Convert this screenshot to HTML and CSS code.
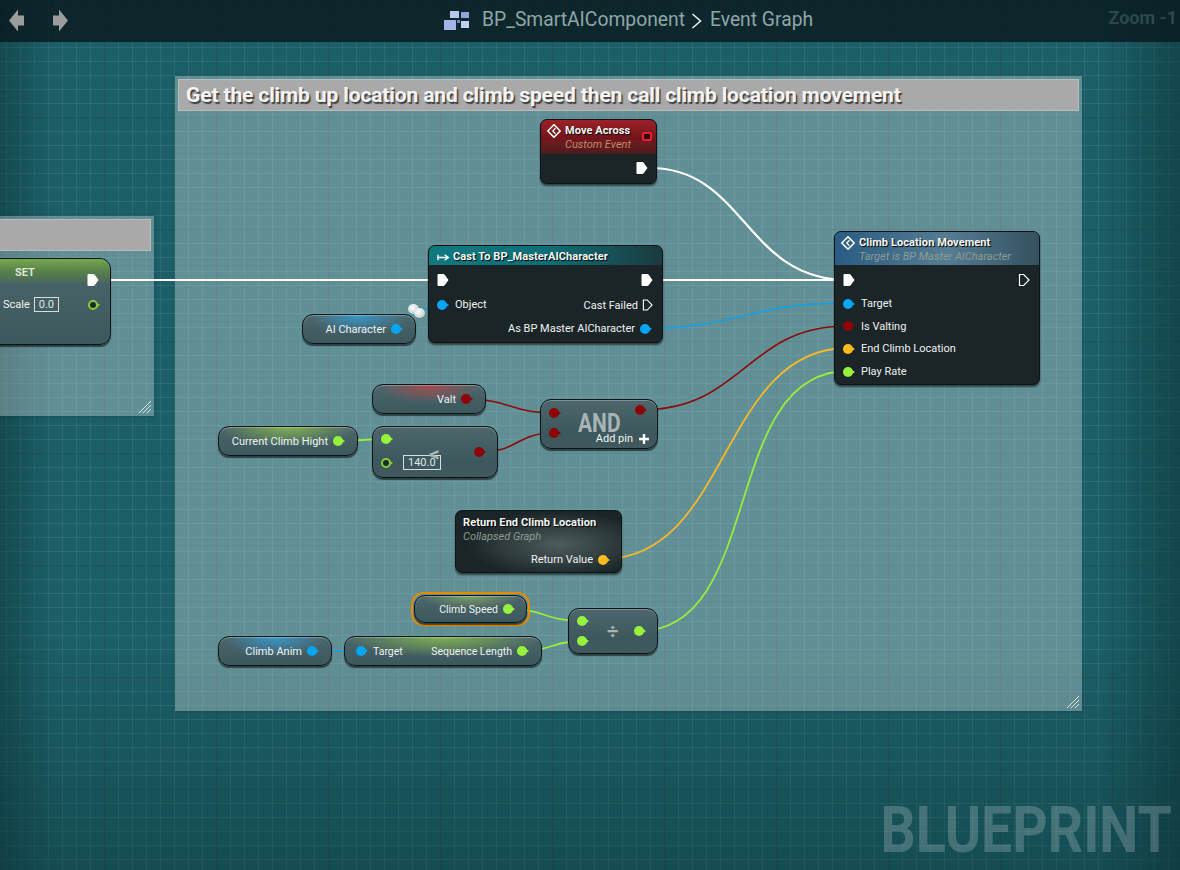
FILE: index.html
```html
<!DOCTYPE html>
<html lang="en">
<head>
<meta charset="utf-8">
<title>BP_SmartAIComponent - Event Graph</title>
<link rel="stylesheet" href="styles.css">
</head>
<body>
<svg class="defs" width="0" height="0" aria-hidden="true">
  <defs>
    <symbol id="exec" viewBox="0 0 12 14"><path d="M1.500 1h4.500q1 0 1.700.8l3.800 5.200-3.800 5.200q-.7.8-1.700.8H1.500q-1 0-1-1V2q0-1 1-1z"/></symbol>
    <symbol id="event" viewBox="0 0 14 14"><path d="M7 .8 13.200 7 7 13.200.8 7z" fill="none" stroke="#fff" stroke-width="1.600"/><path d="M8.400 4.200 5.800 7l2.600 2.800" fill="none" stroke="#fff" stroke-width="1.300"/></symbol>
  </defs>
</svg>
<div class="app">
  <header class="topbar">
    <nav class="nav">
      <svg class="nav-icon" viewBox="0 0 16 22"><path d="M0 11 9 0v6h6v10H9v6z" fill="#9c9c9c"/></svg>
      <svg class="nav-icon" viewBox="0 0 16 22"><path d="M16 11 7 0v6H1v10h6v6z" fill="#9c9c9c"/></svg>
    </nav>
    <div class="crumbs">
      <svg class="bp-logo" viewBox="0 0 26 20">
        <rect x="6" y="0" width="9" height="7" fill="#b9c6ee"/>
        <rect x="17" y="1" width="8" height="6" fill="#8fa3dc"/>
        <rect x="0" y="9" width="12" height="10" fill="#a3b4e8"/>
        <rect x="17" y="10" width="8" height="7" fill="#c3cff2"/>
        <rect x="13" y="9" width="3" height="3" fill="#6f83bd"/>
      </svg>
      <span class="crumb-text">BP_SmartAIComponent</span>
      <svg class="chevron" viewBox="0 0 11 16"><path d="M1.500 1 9.500 8l-8 7" fill="none" stroke="#e8eeee" stroke-width="1.600"/></svg>
      <span class="crumb-text">Event Graph</span>
    </div>
    <div class="zoom">Zoom -1</div>
  </header>

  <main class="canvas">
    <section class="comment c-left">
      <div class="comment-title"></div>
      <svg class="grip" viewBox="0 0 12 12"><path d="M0 12 12 0M4 12 12 4M8 12l4-4" stroke="#d8e4e4" stroke-width="1"/></svg>
    </section>
    <section class="comment c-main">
      <div class="comment-title">Get the climb up location and climb speed then call climb location movement</div>
      <svg class="grip" viewBox="0 0 12 12"><path d="M0 12 12 0M4 12 12 4M8 12l4-4" stroke="#d8e4e4" stroke-width="1"/></svg>
    </section>

    <svg class="wires" viewBox="0 0 1180 870" width="1180" height="870">
      <g fill="none" stroke-width="2">
        <path class="w-exec" d="M98 280H848"/>
        <path class="w-exec" d="M650 168C745 168 745 280 848 280"/>
        <path class="w-obj" d="M396 329C412 329 404 313 416 311"/>
        <path class="w-obj" d="M420 312C428 309 428 304 442 304"/>
        <path class="w-obj" d="M645 328C745 328 745 303 848 303"/>
        <path class="w-bool" d="M640 410C745 410 745 326 848 326"/>
        <path class="w-vec" d="M603 559C730 559 720 348 848 348"/>
        <path class="w-flt" d="M639 631C765 631 720 371 848 371"/>
        <path class="w-bool" d="M465 399C510 399 510 413 554 413"/>
        <path class="w-bool" d="M479 452C520 452 515 433 554 433"/>
        <path class="w-flt" d="M338 441C362 441 362 439 386 439"/>
        <path class="w-flt" d="M508 609C545 609 545 621 582 621"/>
        <path class="w-flt" d="M522 651C552 651 552 641 582 641"/>
        <path class="w-obj" d="M312 651H360"/>
      </g>
    </svg>

    <article class="node pure n-set tint-green">
      <div class="set-title">SET</div>
      <div class="row set-exec"><svg class="exec"><use href="#exec"/></svg></div>
      <div class="row set-row"><span>Scale</span><span class="input">0.0</span><span class="pin hollow green set-pin"></span></div>
    </article>

    <article class="node solid n-move">
      <div class="head head-red">
        <svg class="ev-icon"><use href="#event"/></svg>
        <div class="head-text"><b>Move Across</b><i class="sub-red">Custom Event</i></div>
        <span class="delegate"></span>
      </div>
      <div class="row end move-exec"><svg class="exec"><use href="#exec"/></svg></div>
    </article>

    <article class="node solid n-cast">
      <div class="head head-teal">
        <svg class="cast-icon" viewBox="0 0 12 8"><path d="M0 4h10M1 1.500v5M7 1.500 10.500 4 7 6.500" fill="none" stroke="#fff" stroke-width="1.200"/></svg>
        <b>Cast To BP_MasterAICharacter</b>
      </div>
      <div class="cast-body">
        <div class="row between exec-row"><svg class="exec"><use href="#exec"/></svg><svg class="exec"><use href="#exec"/></svg></div>
        <div class="row between"><span class="lab"><span class="pin blue"></span>Object</span><span class="lab failed">Cast Failed<svg class="exec open" viewBox="0 0 12 14"><path d="M1.500 1.500h4.200l5.300 5.500-5.300 5.500H1.500z"/></svg></span></div>
        <div class="row end as-row"><span class="lab">As BP Master AICharacter<span class="pin blue"></span></span></div>
      </div>
    </article>

    <article class="node solid n-climb">
      <div class="head head-blue">
        <svg class="ev-icon"><use href="#event"/></svg>
        <div class="head-text"><b>Climb Location Movement</b><i>Target is BP Master AICharacter</i></div>
      </div>
      <div class="climb-body">
        <div class="row between exec-row"><svg class="exec"><use href="#exec"/></svg><svg class="exec open" viewBox="0 0 12 14"><path d="M1.500 1.500h4.200l5.300 5.500-5.300 5.500H1.500z"/></svg></div>
        <div class="row lab"><span class="pin blue"></span>Target</div>
        <div class="row lab"><span class="pin red"></span>Is Valting</div>
        <div class="row lab"><span class="pin yellow"></span>End Climb Location</div>
        <div class="row lab"><span class="pin green"></span>Play Rate</div>
      </div>
    </article>

    <article class="node pure getter n-ai tint-blue"><span>AI Character</span><span class="pin blue"></span></article>
    <article class="node pure getter n-valt tint-red"><span>Valt</span><span class="pin red"></span></article>
    <article class="node pure getter n-hight tint-green"><span>Current Climb Hight</span><span class="pin green"></span></article>

    <article class="node pure n-less">
      <div class="op-col">
        <span class="pin green"></span>
        <div class="row less-row"><span class="pin hollow green"></span><span class="input">140.0</span></div>
      </div>
      <span class="op-mark">&lt;</span>
      <span class="pin red less-out"></span>
    </article>

    <article class="node pure n-and">
      <div class="op-col and-in"><span class="pin red"></span><span class="pin red"></span></div>
      <span class="and-mark">AND</span>
      <span class="pin red and-out"></span>
      <span class="add-pin">Add pin<svg class="plus" viewBox="0 0 10 10"><path d="M5 0v10M0 5h10" stroke="#fff" stroke-width="2.400"/></svg></span>
    </article>

    <article class="node solid n-return">
      <div class="head-text"><b>Return End Climb Location</b><i>Collapsed Graph</i></div>
      <div class="row end ret-row"><span class="lab">Return Value<span class="pin yellow"></span></span></div>
    </article>

    <div class="selected n-speed-ring">
      <article class="node pure getter n-speed tint-soft"><span>Climb Speed</span><span class="pin green"></span></article>
    </div>

    <article class="node pure getter n-anim tint-blue"><span>Climb Anim</span><span class="pin blue"></span></article>

    <article class="node pure n-seq tint-green">
      <span class="lab"><span class="pin blue"></span>Target</span>
      <span class="lab">Sequence Length<span class="pin green"></span></span>
    </article>

    <article class="node pure n-div">
      <div class="op-col div-in"><span class="pin green"></span><span class="pin green"></span></div>
      <span class="div-mark">÷</span>
      <span class="pin green"></span>
    </article>

    <span class="knot k1"></span>
    <span class="knot k2"></span>

    <div class="watermark">BLUEPRINT</div>
  </main>
</div>
</body>
</html>
```

FILE: styles.css
```css
* { box-sizing: border-box; }
html, body { margin: 0; padding: 0; overflow: hidden; }
body { width: 1180px; height: 870px; font-family: Roboto, "Liberation Sans", sans-serif; }
.defs { position: absolute; }

.app {
  position: relative;
  width: 1180px;
  height: 870px;
  overflow: hidden;
  background-color: #1c5f67;
  background-image:
    linear-gradient(90deg, rgba(10,45,50,.42), rgba(10,45,50,0) 55px, rgba(10,45,50,0) 1100px, rgba(10,45,50,.5)),
    linear-gradient(180deg, rgba(10,45,50,0) 640px, rgba(10,45,50,.38)),
    linear-gradient(90deg, rgba(0,30,35,.3) 1px, transparent 1px),
    linear-gradient(180deg, rgba(0,30,35,.3) 1px, transparent 1px),
    linear-gradient(90deg, rgba(255,255,255,.075) 1px, transparent 1px),
    linear-gradient(180deg, rgba(255,255,255,.075) 1px, transparent 1px);
  background-size: auto, auto, 112px 112px, 112px 112px, 14px 14px, 14px 14px;
  background-position: 0 0, 0 0, 104px 0, 0 117px, 6px 0, 0 5px;
}

.topbar {
  position: relative;
  z-index: 5;
  height: 42px;
  display: flex;
  align-items: center;
  background: rgba(8, 26, 31, .82);
  padding: 0 3px 0 9px;
}
.nav { display: flex; gap: 27px; width: 409px; padding-bottom: 2px; }
.nav-icon { width: 16px; height: 23px; display: block; }
.crumbs { display: flex; align-items: center; margin-left: 26px; }
.bp-logo { width: 26px; height: 20px; margin-right: 12px; }
.crumb-text { font-size: 19.3px; color: #8fa6a9; line-height: 22px; padding-bottom: 2px; }
.chevron { width: 11px; height: 16px; margin: 0 8px 0 6px; }
.zoom { margin-left: auto; font-size: 18px; font-weight: 700; color: #2c474d; padding-bottom: 7px; }

.canvas { position: absolute; inset: 0; }

.comment {
  position: absolute;
  background: rgba(255,255,255,.3);
  padding: 3px;
  box-shadow: 0 0 3px rgba(0,30,35,.35);
}
.c-main { left: 175px; top: 76px; width: 907px; height: 635px; }
.c-left { left: -40px; top: 216px; width: 194px; height: 200px; }
.comment-title {
  height: 32px;
  background: #a9a9a9;
  border: 1px solid #b8bcbc;
  padding-left: 7px;
  font-size: 21px;
  letter-spacing: -.13px;
  font-weight: 700;
  line-height: 31px;
  color: #f4f4f4;
  white-space: nowrap;
  text-shadow: 1.5px 1.5px 1px #3f3f3f;
}
.grip { position: absolute; right: 3px; bottom: 3px; width: 12px; height: 12px; }

.wires { position: absolute; left: 0; top: 0; }
.w-exec { stroke: #fff; stroke-width: 2.2; }
.w-obj { stroke: #0ea2e6; stroke-width: 1.5; }
.w-bool { stroke: #8c0a0a; stroke-width: 1.6; }
.w-vec { stroke: #f4b92b; stroke-width: 1.8; }
.w-flt { stroke: #97ec3e; stroke-width: 1.8; }

.node {
  position: absolute;
  color: #eef2f2;
  font-size: 11px;
  white-space: nowrap;
  border: 1px solid #0b1416;
  box-shadow: 0 2px 2px rgba(0,0,0,.55);
}
.solid {
  background: #1b2527;
  border-radius: 7px;
  overflow: hidden;
}
.pure {
  border-radius: 11px;
  background: linear-gradient(180deg, #4c666b, #3d585d 70%, #42595e);
  box-shadow: inset 0 1px 0 rgba(255,255,255,.28), 0 2px 1px rgba(0,0,0,.55);
}
.tint-green { background: radial-gradient(ellipse 50% 70% at 50% 0, #7fb052, rgba(127,176,82,0)), linear-gradient(180deg, #4c666b, #3d585d); }
.tint-blue { background: radial-gradient(ellipse 45% 70% at 50% 0, #3a96c8, rgba(58,150,200,0)), linear-gradient(180deg, #4c666b, #3d585d); }
.tint-red { background: radial-gradient(ellipse 45% 65% at 50% 0, #a34c50, rgba(163,76,80,0)), linear-gradient(180deg, #4c666b, #3d585d); }
.tint-soft { background: radial-gradient(ellipse 45% 50% at 50% 0, #7f9f66, rgba(127,159,102,0)), linear-gradient(180deg, #4c666b, #3d585d); }

.head { display: flex; align-items: flex-start; }
.head b, .head-text b { display: block; font-weight: 700; font-size: 11px; letter-spacing: .08px; line-height: 14px; color: #f5f7f7; text-shadow: 1px 1px 1px #000; }
.head-text i { display: block; font-size: 11px; line-height: 14px; color: #8c9c8e; font-style: italic; }
i.sub-red { color: #c08a66; }
.head-red { height: 34px; padding: 4px 0 0 6px; background: linear-gradient(180deg, #9d2128, #70151a 55%, #6e1a1e 65%, #4a1c1f); position: relative; }
.head-blue { height: 33px; padding: 4px 0 0 6px; background: linear-gradient(90deg, rgba(40,90,130,.9), rgba(95,130,150,.75) 55%, rgba(50,75,85,.8)), #3b6a8a; }
.head-teal { height: 19px; padding: 3px 0 0 8px; align-items: center; background: linear-gradient(90deg, #11787f, #0f6f78 50%, #1b3a3f); }
.ev-icon { width: 14px; height: 14px; margin-right: 4px; flex: none; }
.cast-icon { width: 13px; height: 9px; margin-right: 3px; }

.row { display: flex; align-items: center; }
.between { justify-content: space-between; }
.end { justify-content: flex-end; }
.lab { display: flex; align-items: center; gap: 5px; }
.exec-row { margin-bottom: 1px; }

.exec { width: 12px; height: 14px; fill: #fff; display: block; flex: none; }
.exec.open { fill: none; stroke: #fff; stroke-width: 1.2; }

.pin { position: relative; display: block; flex: none; width: 10px; height: 10px; border-radius: 50%; }
.pin::after {
  content: "";
  position: absolute;
  left: 9px;
  top: 3px;
  border-left: 3px solid currentColor;
  border-top: 2px solid transparent;
  border-bottom: 2px solid transparent;
}
.pin.blue { background: #05a5f2; color: #05a5f2; }
.pin.red { background: #8c0208; color: #8c0208; }
.pin.yellow { background: #fcbc1c; color: #fcbc1c; }
.pin.green { background: #97f23d; color: #97f23d; }
.pin.hollow { background: #1c2a2c; border: 2px solid #84d033; color: #84d033; }
.pin.hollow::after { left: 7px; top: 1px; }

.input { display: block; border: 1px solid #d8dede; padding: 0 4px; height: 15px; line-height: 14px; font-size: 11px; color: #dfe6e6; }

.n-move { left: 540px; top: 119px; width: 117px; height: 65px; }
.move-exec { padding: 7px 8px 0 0; }
.delegate { position: absolute; right: 4px; top: 12px; width: 10px; height: 9px; background: #2a0a0a; border: 2px solid #f0202a; border-radius: 2px; }

.n-cast { left: 428px; top: 245px; width: 235px; height: 98px; }
.cast-body { padding: 8px 9px 0 8px; display: flex; flex-direction: column; gap: 11px; }
.cast-body .row { height: 13px; }
.cast-body .lab { gap: 8px; }
.cast-body .failed { gap: 4px; margin-top: 1px; }
.cast-body .failed .exec { width: 11px; }
.cast-body .as-row .lab { gap: 5px; }
.as-row { padding-right: 3px; }

.n-climb { left: 834px; top: 231px; width: 206px; height: 154px; }
.climb-body { padding: 8px 9px 0 8px; display: flex; flex-direction: column; gap: 8.67px; }
.climb-body .row { height: 14px; }
.climb-body .lab { gap: 8px; }

.getter { display: flex; align-items: center; justify-content: flex-end; gap: 5px; padding-right: 14px; }
.n-ai { left: 302px; top: 314px; width: 114px; height: 30px; }
.n-valt { left: 372px; top: 384px; width: 114px; height: 30px; }
.n-hight { left: 218px; top: 426px; width: 140px; height: 30px; }

.op-col { display: flex; flex-direction: column; }
.n-less { left: 372px; top: 426px; width: 126px; height: 52px; display: flex; justify-content: space-between; align-items: flex-start; padding: 7px 13px 0 8px; }
.n-less .op-col { gap: 11px; }
.less-row { gap: 12px; }
.op-mark { position: absolute; left: 56px; top: 15px; font-size: 21px; line-height: 24px; font-weight: 700; color: #a8b4b6; }
.less-out { margin-top: 13px; }

.n-and { left: 540px; top: 399px; width: 118px; height: 50px; display: flex; justify-content: space-between; align-items: flex-start; padding: 8px 12px 0 8px; }
.and-in { gap: 10px; }
.and-mark { position: absolute; left: 37px; top: 14px; font-size: 25px; line-height: 20px; font-weight: 700; color: #a8b4b6; transform: scaleX(.84); transform-origin: 0 50%; }
.and-out { margin-top: -3px; }
.add-pin { position: absolute; right: 8px; top: 32px; display: flex; align-items: center; gap: 6px; color: #f0f4f4; }
.plus { width: 10px; height: 10px; }

.n-return { left: 455px; top: 510px; width: 167px; height: 63px; padding: 5px 0 0 7px; background: radial-gradient(ellipse 55% 55% at 62% 55%, #4d5c5c, #1b2527); }
.ret-row { padding: 9px 13px 0 0; }

.selected { position: absolute; }
.n-speed-ring { left: 411px; top: 592px; width: 119px; height: 34px; border: 2px solid #e48a05; border-radius: 13px; box-shadow: 0 0 1px #e48a05; }
.n-speed { left: 1px; top: 1px; width: 113px; height: 28px; padding-right: 13px; font-size: 10.5px; }

.n-anim { left: 218px; top: 636px; width: 114px; height: 30px; }
.n-seq { left: 344px; top: 636px; width: 198px; height: 30px; display: flex; align-items: center; justify-content: space-between; padding: 0 14px 0 11px; font-size: 10.5px; }
.n-seq .lab:first-child { gap: 7px; }

.n-div { left: 568px; top: 608px; width: 90px; height: 46px; display: flex; align-items: center; justify-content: space-between; padding: 0 13px 0 8px; }
.div-in { gap: 10px; }
.div-mark { position: absolute; left: 38px; top: 11px; font-size: 20px; line-height: 22px; font-weight: 700; color: #a8b4b6; }

.set-title { height: 24px; padding: 7px 0 0 44px; font-size: 11px; font-weight: 700; color: #d8e4d4; line-height: 13px; background: linear-gradient(180deg, #77a84e, #58814a 50%, rgba(80,110,80,.4)); border-radius: 10px 10px 0 0; margin-bottom: -10px; }
.n-set { left: -30px; top: 258px; width: 141px; height: 87px; background: linear-gradient(180deg, #4c666b, #3d585d); }
.set-exec { justify-content: flex-end; padding-right: 11px; }
.set-row { padding-left: 32px; margin-top: 10px; }
.set-row .input { margin-left: 4px; }
.set-pin { margin-left: 29px; }

.knot { position: absolute; width: 11px; height: 10px; border-radius: 50%; background: radial-gradient(circle at 40% 35%, #fff, #c8d2d4 70%, #7f8c8f); }
.k1 { left: 408px; top: 304px; }
.k2 { left: 414px; top: 308px; }

.watermark {
  position: absolute;
  right: 8px;
  top: 795px;
  font-family: Roboto, "Liberation Sans", sans-serif;
  font-size: 65px;
  line-height: 70px;
  font-weight: 700;
  color: rgba(255,255,255,.2);
  transform: scaleX(.85);
  transform-origin: 100% 50%;
}
```
